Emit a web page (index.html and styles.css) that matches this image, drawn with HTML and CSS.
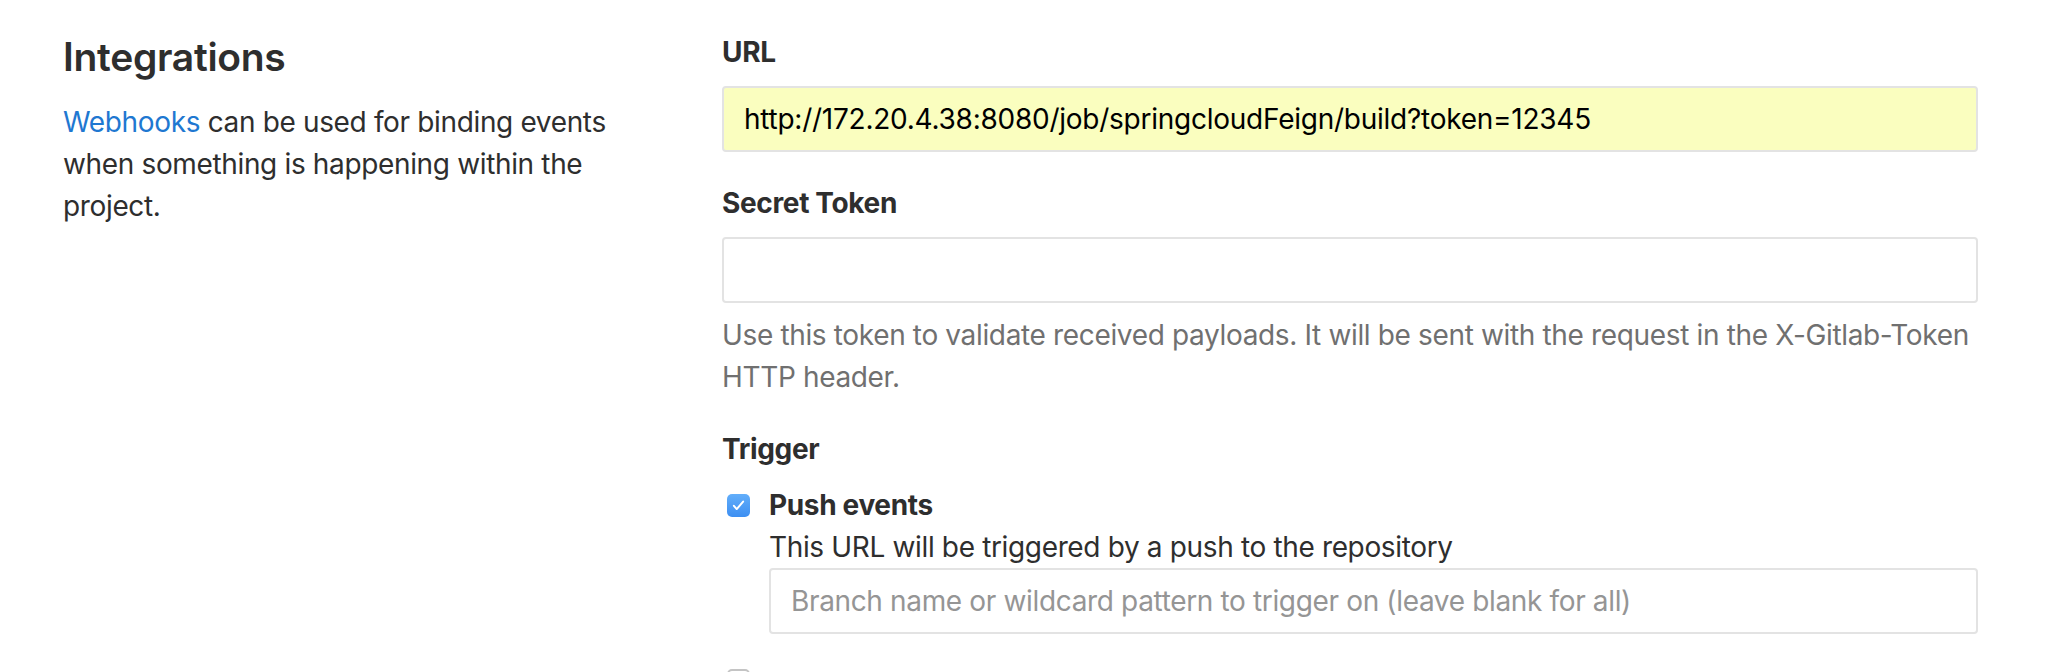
FILE: index.html
```html
<!DOCTYPE html>
<html lang="en">
<head>
<meta charset="utf-8">
<title>Integrations</title>
<link rel="stylesheet" href="styles.css">
</head>
<body>
<div class="page">
  <div class="settings-row">
    <aside class="side">
      <h4 class="side-title">Integrations</h4>
      <p class="side-text"><a href="#" class="link">Webhooks</a> can be used for binding events when something is happening within the project.</p>
    </aside>
    <form class="main">
      <div class="form-group">
        <label class="label">URL</label>
        <div class="input input-autofill">http://172.20.4.38:8080/job/springcloudFeign/build?token=12345</div>
      </div>
      <div class="form-group">
        <label class="label">Secret Token</label>
        <div class="input"></div>
        <p class="help">Use this token to validate received payloads. It will be sent with the request in the X-Gitlab-Token HTTP header.</p>
      </div>
      <div class="form-group">
        <label class="label">Trigger</label>
        <div class="trigger">
          <div class="check-row">
            <span class="checkbox checked"><svg viewBox="0 0 24 24" width="17" height="17"><path d="M5.5 12.5l4 4.5L18.5 6.5" fill="none" stroke="#fff" stroke-width="2.8" stroke-linecap="round" stroke-linejoin="round"/></svg></span>
            <span class="check-label">Push events</span>
          </div>
          <div class="check-body">
            <p class="check-desc">This URL will be triggered by a push to the repository</p>
            <div class="input placeholder">Branch name or wildcard pattern to trigger on (leave blank for all)</div>
          </div>
        </div>
        <div class="trigger next">
          <div class="check-row">
            <span class="checkbox"></span>
          </div>
        </div>
      </div>
    </form>
  </div>
</div>
</body>
</html>
```
FILE: styles.css
```css
html, body {
  margin: 0;
  padding: 0;
  background: #fff;
  overflow: hidden;
}

body {
  font-family: Inter, "Noto Sans", Roboto, sans-serif;
  font-size: 28px;
  line-height: 42px;
  letter-spacing: -0.35px;
  color: #2e2e2e;
}

.page {
  padding: 0 84px 0 63px;
}

.settings-row {
  display: grid;
  grid-template-columns: 597px 1256px;
  column-gap: 62px;
}

.side-title {
  margin: 33px 0 20px;
  font-size: 39px;
  line-height: 48px;
  font-weight: 600;
  color: #2e2e2e;
  letter-spacing: -0.3px;
}

.side-text {
  margin: 0;
}

.link {
  color: #1f78d1;
  text-decoration: none;
}

.main {
  padding-top: 31px;
}

.form-group {
  margin-bottom: 30px;
}

.label {
  display: block;
  font-weight: 700;
  margin-bottom: 13px;
}

.input {
  box-sizing: border-box;
  height: 66px;
  border: 2px solid #e3e3e3;
  border-radius: 4px;
  background: #fff;
  padding: 0 20px;
  display: flex;
  align-items: center;
  font-size: 28px;
  white-space: nowrap;
  overflow: hidden;
}

.input-autofill {
  background: #fafebf;
  color: #000;
  letter-spacing: -0.25px;
}

.placeholder {
  color: #959595;
}

.help {
  margin: 11px 0 0;
  color: #707070;
}

.trigger {
  padding-left: 47px;
}

.check-row {
  display: flex;
  align-items: center;
  margin-left: -47px;
  margin-top: 14px;
  min-height: 42px;
}

.checkbox {
  box-sizing: border-box;
  width: 23px;
  height: 23px;
  margin: 0 19px 0 5px;
  border-radius: 5px;
  border: 2px solid #c4c4c4;
  background: #fff;
  display: flex;
  align-items: center;
  justify-content: center;
}

.checkbox.checked {
  border: none;
  background: linear-gradient(#62aefa, #3d8ff2);
}

.check-label {
  font-weight: 700;
}

.check-desc {
  margin: 0;
}

.next .check-row {
  margin-top: 25px;
}
```
